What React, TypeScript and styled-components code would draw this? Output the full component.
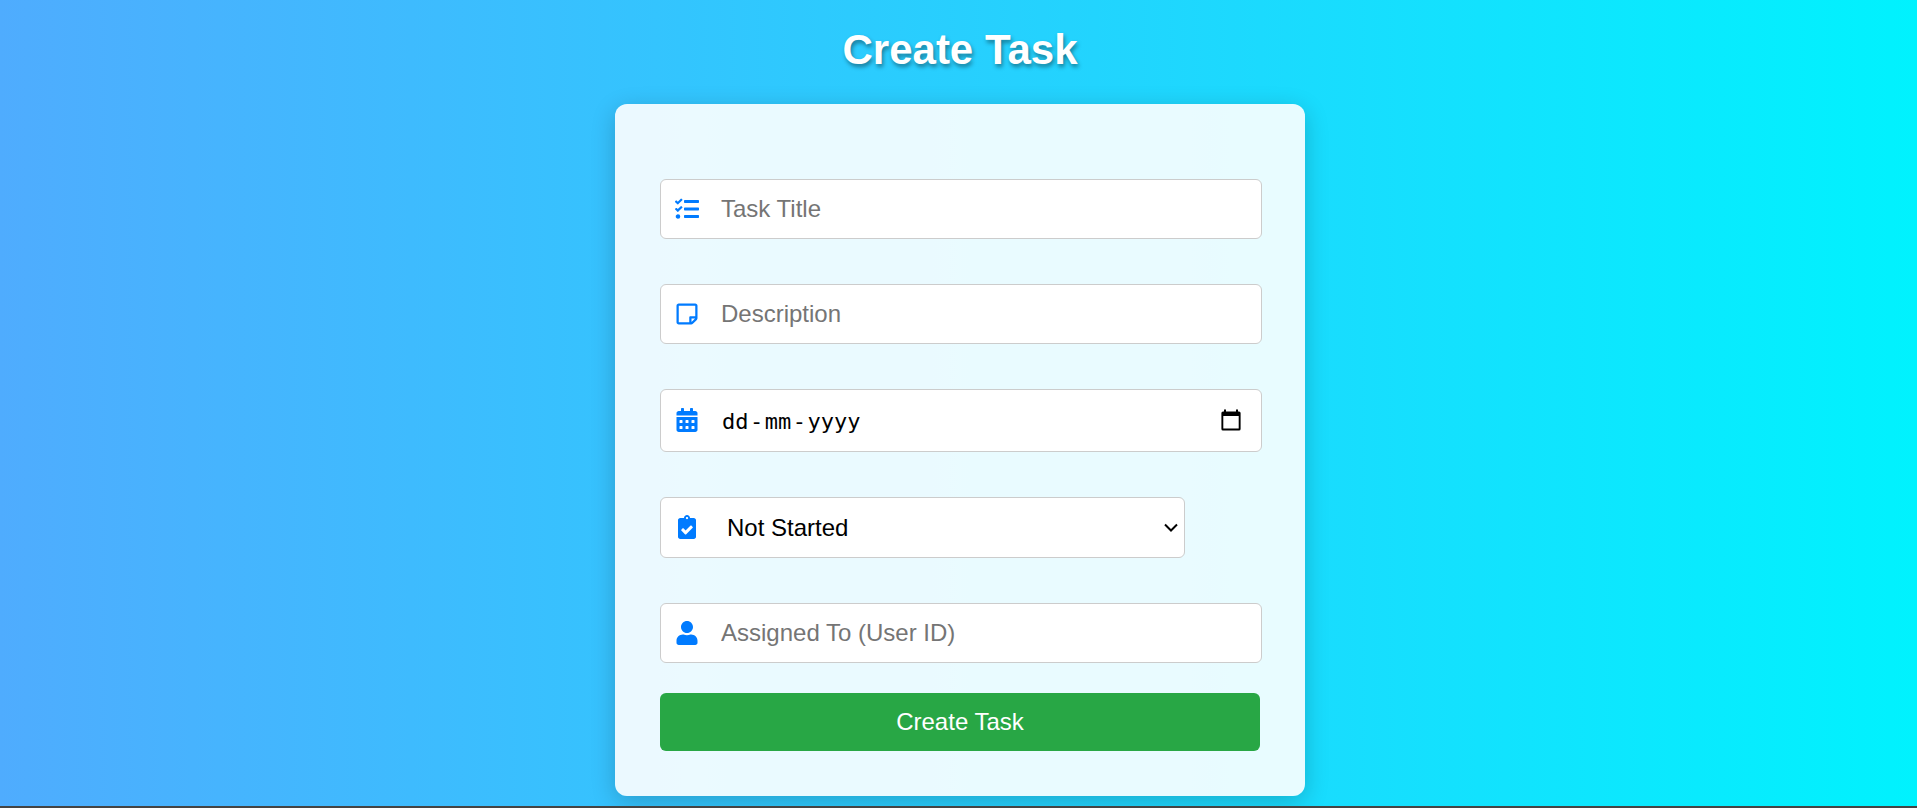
import React from "react";
import styled, { createGlobalStyle } from "styled-components";
import { FaTasks, FaRegStickyNote, FaCalendarAlt, FaClipboardCheck, FaUser } from "react-icons/fa";

const GlobalStyle = createGlobalStyle`
  * { box-sizing: border-box; }
  body {
    margin: 0;
    overflow: hidden;
    font-family: "Liberation Sans", Arial, sans-serif;
  }
`;

const Page = styled.div`
  height: 808px;
  display: flex;
  flex-direction: column;
  align-items: center;
  padding-left: 3px;
  overflow: hidden;
  border-bottom: 2px solid #444;
  background: linear-gradient(to right, #4facfe, #00f2fe) border-box;
`;

const Title = styled.h1`
  margin: 26px 0 30px;
  height: 48px;
  line-height: 48px;
  font-size: 42px;
  font-weight: bold;
  color: #fff;
  text-shadow: 1.5px 3px 4.5px rgba(0, 0, 0, 0.4);
`;

const Card = styled.form`
  width: 690px;
  height: 692px;
  padding: 75px 43px 45px 45px;
  border-radius: 12px;
  background: rgba(255, 255, 255, 0.9);
  box-shadow: 0 6px 24px rgba(0, 0, 0, 0.2);
`;

const Field = styled.label<{ $height?: number; $width?: number; $gap?: number }>`
  display: flex;
  align-items: center;
  width: ${(p) => p.$width ?? 602}px;
  height: ${(p) => p.$height ?? 60}px;
  margin-bottom: ${(p) => p.$gap ?? 45}px;
  padding-left: 14px;
  border: 1px solid #ccc;
  border-radius: 6px;
  background: #fff;
`;

const IconSlot = styled.span<{ $raise?: boolean; $narrow?: boolean }>`
  display: flex;
  justify-content: center;
  flex: none;
  width: ${(p) => (p.$narrow ? 23 : 24)}px;
  margin-right: ${(p) => (p.$narrow ? 23 : 22)}px;
  margin-bottom: ${(p) => (p.$raise ? 1 : 0)}px;
  font-size: 24px;
  color: #007bff;

  svg {
    flex: none;
  }
`;

const TextInput = styled.input`
  flex: 1;
  min-width: 0;
  padding: 0;
  border: 0;
  outline: 0;
  background: transparent;
  font: 24px "Liberation Sans", Arial, sans-serif;
  color: #000;

  &::placeholder {
    color: #757575;
  }
`;

const DateValue = styled.span`
  flex: 1;
  display: flex;
  gap: 1.5px;
  padding: 1px 0 0 1px;
  font: 22px "DejaVu Sans Mono", monospace;
  color: #000;
`;

const DateGlyph = styled.svg`
  flex: none;
  margin: 0 19px 1px 0;
`;

const StatusValue = styled.span`
  flex: 1;
  padding-left: 6px;
  font-size: 24px;
  color: #000;
`;

const Chevron = styled.svg`
  flex: none;
  margin-right: 5px;
`;

const Submit = styled.button`
  display: block;
  width: 600px;
  height: 58px;
  padding: 0;
  border: 0;
  border-radius: 6px;
  background: #28a745;
  color: #fff;
  font: 24px "Liberation Sans", Arial, sans-serif;
`;

export default function App() {
  return (
    <>
      <GlobalStyle />
      <Page>
        <Title>Create Task</Title>
        <Card onSubmit={(e) => e.preventDefault()}>
          <Field>
            <IconSlot><FaTasks /></IconSlot>
            <TextInput placeholder="Task Title" />
          </Field>
          <Field>
            <IconSlot $narrow><FaRegStickyNote /></IconSlot>
            <TextInput placeholder="Description" />
          </Field>
          <Field $height={63}>
            <IconSlot $raise $narrow><FaCalendarAlt /></IconSlot>
            <DateValue>
              <span>dd</span><span>-</span><span>mm</span><span>-</span><span>yyyy</span>
            </DateValue>
            <DateGlyph width="22" height="22" viewBox="0 0 22 22">
              <path fill="#000" fillRule="evenodd" d="M4 0.500h2v2h10v-2h2v2h1a1.600 1.600 0 0 1 1.600 1.600v15.800a1.600 1.600 0 0 1-1.600 1.600H3a1.600 1.600 0 0 1-1.600-1.600V4.100a1.600 1.600 0 0 1 1.600-1.600h1zM3.300 7v12.600h15.400V7z" />
            </DateGlyph>
          </Field>
          <Field $height={61} $width={525}>
            <IconSlot $raise><FaClipboardCheck /></IconSlot>
            <StatusValue>Not Started</StatusValue>
            <Chevron width="16" height="10" viewBox="0 0 16 10">
              <path d="M2 1.500l6 6 6-6" fill="none" stroke="#000" strokeWidth="2" />
            </Chevron>
          </Field>
          <Field $gap={30}>
            <IconSlot $narrow><FaUser /></IconSlot>
            <TextInput placeholder="Assigned To (User ID)" />
          </Field>
          <Submit type="submit">Create Task</Submit>
        </Card>
      </Page>
    </>
  );
}
